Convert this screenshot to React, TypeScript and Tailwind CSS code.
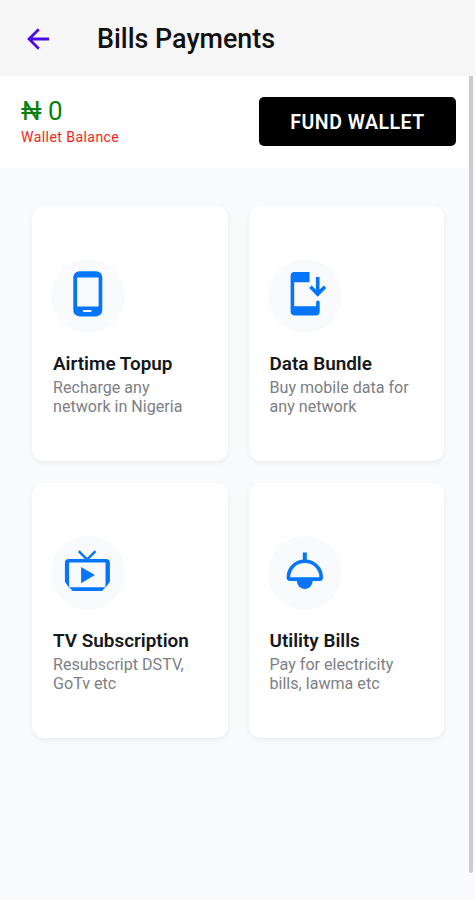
import type { ReactNode } from 'react';

interface Service {
  title: string;
  lines: string[];
  icon: ReactNode;
}

const PhoneIcon = () => (
  <svg viewBox="-8.5 -6 74 74" className="size-full" fill="#0575fc">
    <path
      fillRule="evenodd"
      d="M20 6.2h16.6a6.2 6.2 0 0 1 6.2 6.2v32.8a6.2 6.2 0 0 1-6.2 6.2H20a6.2 6.2 0 0 1-6.2-6.2V12.4A6.2 6.2 0 0 1 20 6.2zM17.6 12.4v29.2h21.5V12.4zM23.5 45v2h8.4v-2z"
    />
  </svg>
);

const DataIcon = () => (
  <svg viewBox="-11.2 -6 74 74" className="size-full" fill="#0575fc">
    <path d="M15.2 7H30.3v10.3H15v23.9h21.9v-3.8a1.8 1.8 0 0 1 3.6 0v9.4a3.6 3.6 0 0 1-3.6 3.6H15.2a3.8 3.8 0 0 1-3.8-3.8V10.8A3.8 3.8 0 0 1 15.2 7z" />
    <path d="M38.5 12v16.5M31.2 21.8l7.3 7.3 7.3-7.3" fill="none" stroke="#0575fc" strokeWidth="3.6" />
  </svg>
);

const TvIcon = () => (
  <svg viewBox="-8.5 -4 74 74" className="size-full" fill="#0575fc">
    <path d="M19.2 11.2l8.4 8.3 8.4-8.3" fill="none" stroke="#0575fc" strokeWidth="2.4" />
    <path d="M9.2 19h37.2a4 4 0 0 1 4 4v18.8l-4.4 6V22.4H9.6v25.4l-4.2-6V23a4 4 0 0 1 3.8-4z" />
    <path d="M9.6 47.2h36.4L42.6 51H13.2z" />
    <path d="M21.6 27v16.2L35.4 35z" />
  </svg>
);

const LampIcon = () => (
  <svg viewBox="-11.2 -4 74 74" className="size-full" fill="#0575fc">
    <path d="M23.6 12.5h4v8h-4z" />
    <path
      d="M9.2 37.5c0-9.2 7-16.3 16.4-16.3S42 28.3 42 37.5c0 1-.5 1.6-1.5 1.6H10.7c-1 0-1.5-.6-1.5-1.6z"
      fill="none"
      stroke="#0575fc"
      strokeWidth="3.6"
    />
    <path d="M17.6 40h16c0 5-3.4 9-8 9s-8-4-8-9z" />
  </svg>
);

const services: Service[] = [
  { title: 'Airtime Topup', lines: ['Recharge any', 'network in Nigeria'], icon: <PhoneIcon /> },
  { title: 'Data Bundle', lines: ['Buy mobile data for', 'any network'], icon: <DataIcon /> },
  { title: 'TV Subscription', lines: ['Resubscript DSTV,', 'GoTv etc'], icon: <TvIcon /> },
  { title: 'Utility Bills', lines: ['Pay for electricity', 'bills, lawma etc'], icon: <LampIcon /> },
];

const ServiceCard = ({ title, lines, icon }: Service) => (
  <div className="flex flex-col items-start rounded-xl bg-white px-[21px] pt-[53px] shadow-[0_2px_5px_rgba(0,0,0,0.06)]">
    <div className="-ml-[2px] size-[74px] rounded-full bg-[#f9fafb]">{icon}</div>
    <h2 className="mt-[19px] text-[18.9px] leading-6 font-semibold whitespace-nowrap text-[#15181c]">{title}</h2>
    <p className="mt-[2px] text-[16.1px] leading-[19px] whitespace-nowrap text-[#7d8084]">
      {lines.map((line) => (
        <span key={line} className="block">{line}</span>
      ))}
    </p>
  </div>
);

export default function App() {
  return (
    <div className="flex h-[900px] w-[475px] flex-col overflow-hidden bg-[#f8fafc] font-['Roboto',sans-serif]">
      <header className="flex h-[76px] shrink-0 items-center bg-[#f6f6f6] pl-[27px]">
        <svg viewBox="0 0 22 22" className="mt-[2px] size-[22px]" fill="none" stroke="#4b0be8" strokeWidth="2.8">
          <path d="M22 11H3M11.8 1.3L2.1 11l9.7 9.7" />
        </svg>
        <h1 className="mt-[2px] ml-[48px] text-[26.9px] font-medium text-[#111]">Bills Payments</h1>
      </header>

      <div className="flex min-h-0 flex-1">
        <main className="w-[469px]">
          <section className="flex h-[92px] items-start justify-between bg-white pr-[13px] pl-[21px]">
            <div className="pt-[20px]">
              <p className="text-[26px] leading-[31px] text-[#088008]">₦ 0</p>
              <p className="text-[14px] leading-[20px] tracking-[0.45px] text-[#fb1c1c]">Wallet Balance</p>
            </div>
            <button className="mt-[21px] h-[49px] w-[197px] rounded-[5px] bg-black pt-[2px] text-[19.5px] font-semibold tracking-[0.5px] text-white">
              FUND WALLET
            </button>
          </section>

          <section className="grid auto-rows-[255px] grid-cols-2 gap-x-[21px] gap-y-[22px] pt-[38px] pr-[25px] pl-[32px]">
            {services.map((service) => (
              <ServiceCard key={service.title} {...service} />
            ))}
          </section>
        </main>
        <div className="h-[797px] w-[4px] rounded-b-sm bg-[#cccdce]" />
      </div>
    </div>
  );
}
